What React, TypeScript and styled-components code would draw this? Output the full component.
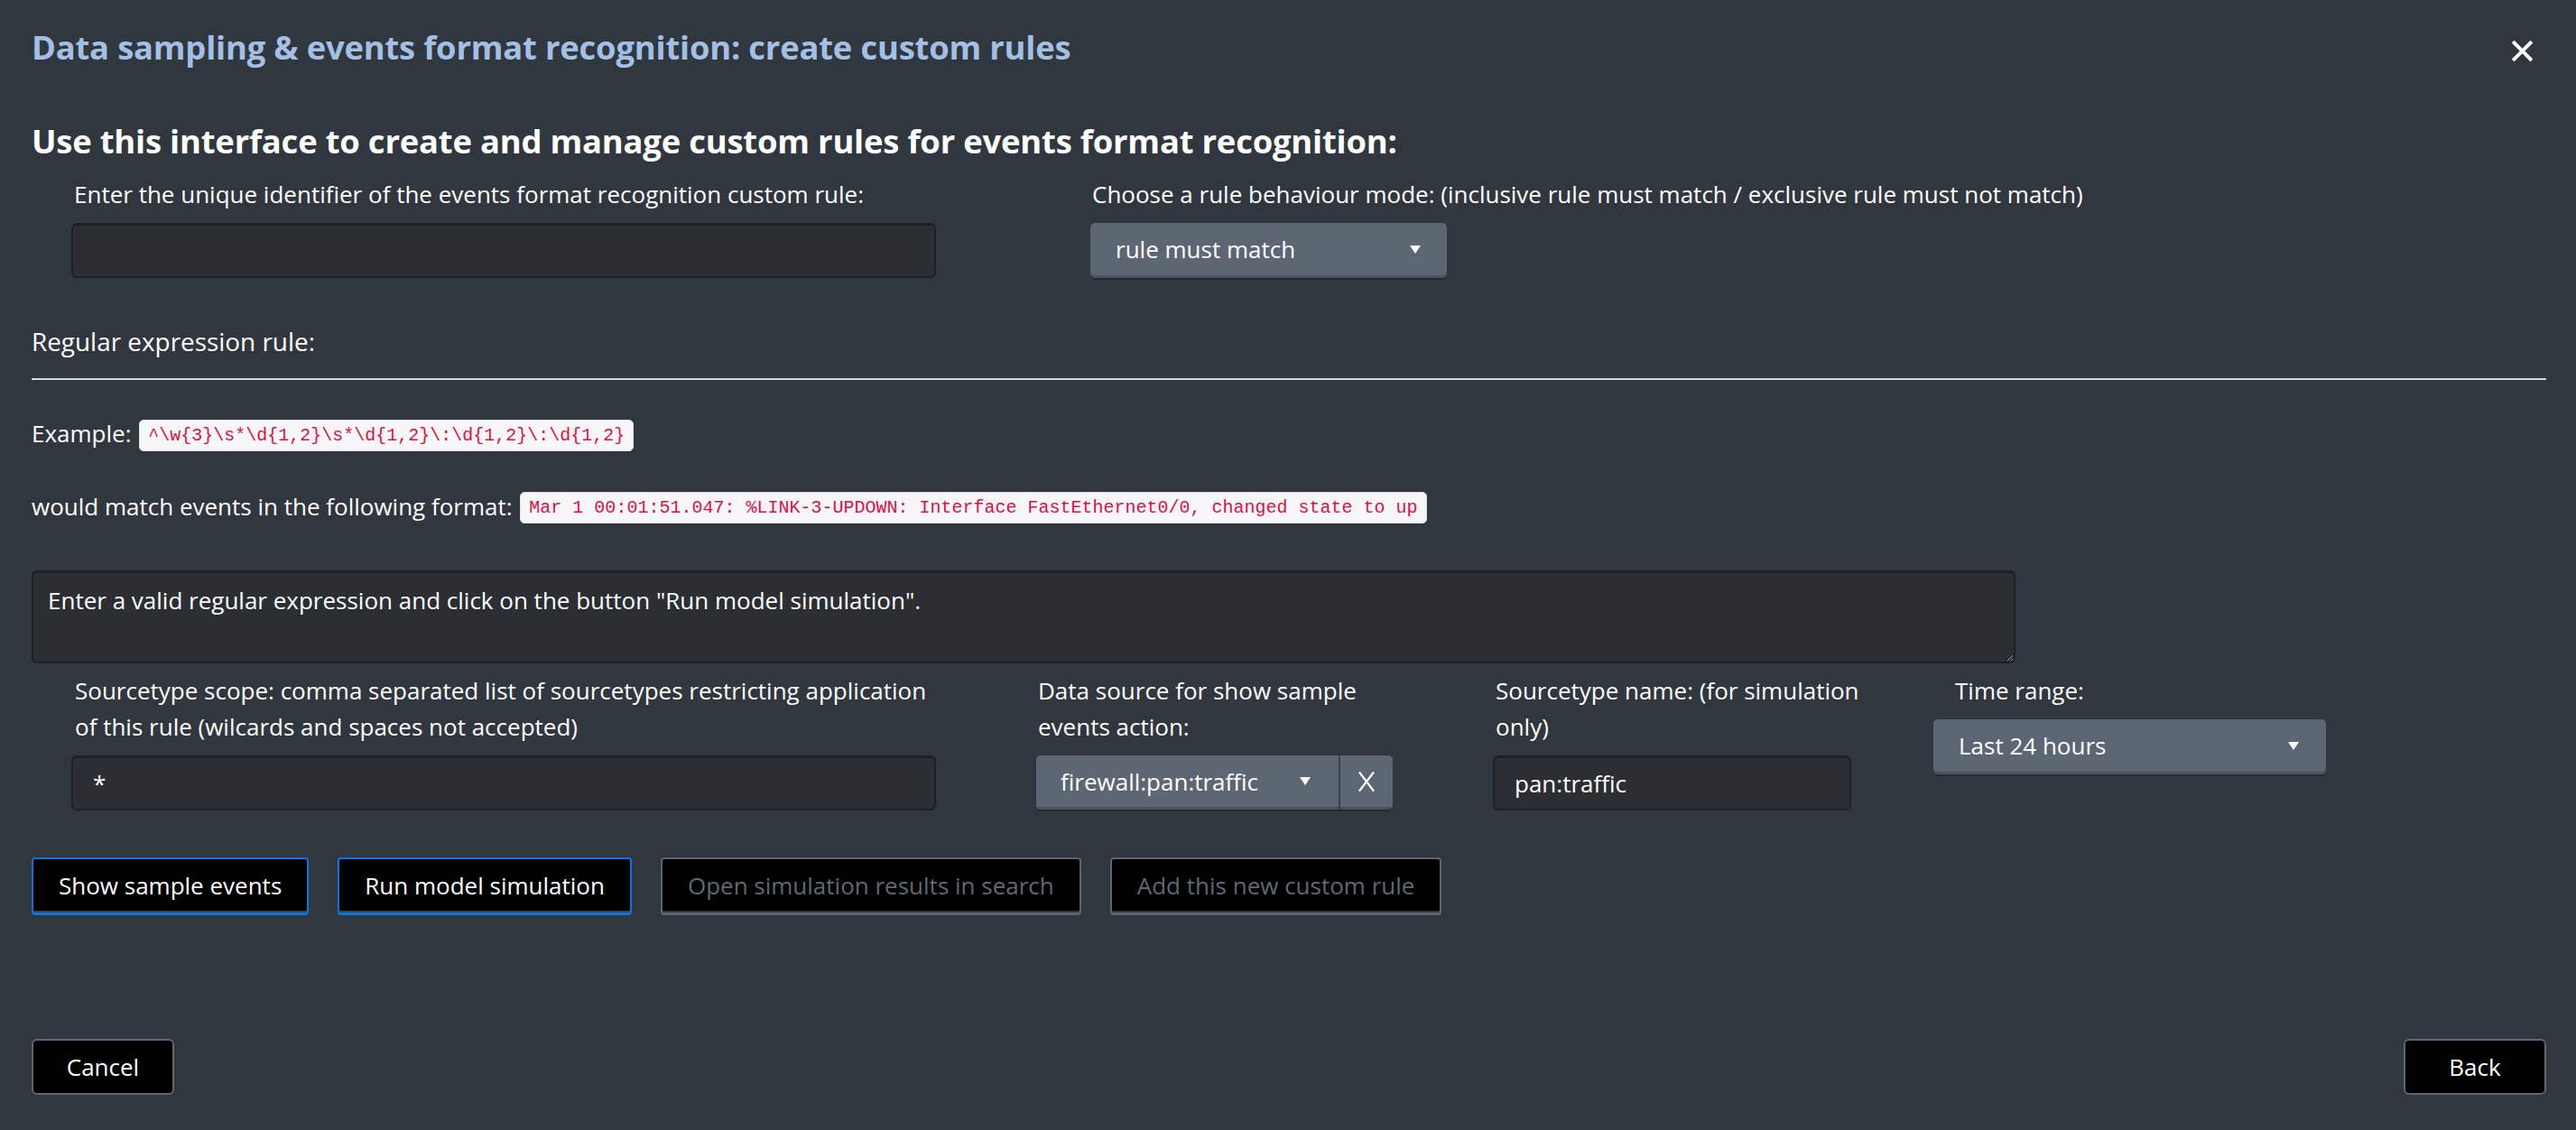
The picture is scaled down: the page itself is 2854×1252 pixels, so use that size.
import React from "react";
import styled, { createGlobalStyle } from "styled-components";

const GlobalStyle = createGlobalStyle`
  html, body {
    margin: 0;
    padding: 0;
    background: #31373e;
  }
  body {
    font-family: "Open Sans", "Liberation Sans", sans-serif;
    color: #ffffff;
    font-size: 26px;
  }
  * { box-sizing: border-box; }
`;

const Modal = styled.div`
  height: 1252px;
  display: flex;
  flex-direction: column;
  background: #31373e;
  overflow: hidden;
`;

const Header = styled.header`
  height: 102px;
  flex: none;
  display: flex;
  align-items: center;
  justify-content: space-between;
  padding: 0 48px 0 35px;
`;

const Title = styled.h1`
  margin: 2px 0 0;
  font-size: 36.4px;
  font-weight: 700;
  line-height: 40px;
  color: #a3c0e4;
  letter-spacing: -0.2px;
`;

const CloseButton = styled.button`
  width: 23px;
  height: 23px;
  margin-top: 10px;
  padding: 0;
  border: 0;
  background: none;
  display: flex;
  cursor: pointer;
`;

const Body = styled.main`
  flex: 1;
  padding: 0 33px 0 35px;
`;

const Heading = styled.h2`
  margin: 34px 0 0;
  font-size: 36.4px;
  font-weight: 700;
  line-height: 40px;
  color: #ffffff;
  letter-spacing: -0.2px;
`;

const FieldRow = styled.div<{ $top: number }>`
  display: flex;
  align-items: flex-start;
  margin-top: ${(p) => p.$top}px;
  padding-left: 44px;
`;

const Field = styled.div<{ $width: number }>`
  width: ${(p) => p.$width}px;
  flex: none;
  display: flex;
  flex-direction: column;
  align-items: flex-start;
`;

const Label = styled.label<{ $inset: number }>`
  display: block;
  padding-left: ${(p) => p.$inset}px;
  margin-bottom: 12px;
  font-size: 26px;
  line-height: 40px;
  color: #ffffff;
  white-space: nowrap;
`;

const TextInput = styled.input<{ $width: number }>`
  width: ${(p) => p.$width}px;
  height: 61px;
  padding: 0 22px;
  background: #2b2f33;
  border: 2px solid #1d2024;
  border-top-width: 3px;
  border-radius: 6px;
  color: #ffffff;
  font-family: "Open Sans", "Liberation Sans", sans-serif;
  font-size: 26px;
  outline: none;
`;

const SelectBox = styled.div<{ $width: number; $pad: number }>`
  width: ${(p) => p.$width}px;
  height: 61px;
  display: flex;
  align-items: center;
  justify-content: space-between;
  padding: 0 ${(p) => p.$pad}px 3px 28px;
  background: #5c6773;
  border-radius: 5px;
  box-shadow: inset 0 -3px 0 #4b545e, 0 2px 0 #272c31;
  color: #ffffff;
  font-size: 26px;
  line-height: 1;
`;

const Caret = styled.span`
  width: 0;
  height: 0;
  border-left: 6px solid transparent;
  border-right: 6px solid transparent;
  border-top: 9px solid #ffffff;
`;

const SelectGroup = styled.div`
  display: flex;
  height: 60px;
  border-radius: 5px;
  box-shadow: 0 2px 0 #272c31;
  overflow: hidden;
`;

const GroupMain = styled.div`
  width: 335px;
  display: flex;
  align-items: center;
  justify-content: space-between;
  padding: 0 31px 3px 27px;
  background: #5c6773;
  box-shadow: inset 0 -3px 0 #4b545e;
  font-size: 26px;
`;

const ClearButton = styled.button`
  width: 60px;
  display: flex;
  align-items: center;
  justify-content: center;
  padding: 0 0 3px;
  border: 0;
  border-left: 2px solid #3a414a;
  background: #5c6773;
  box-shadow: inset 0 -3px 0 #4b545e;
  cursor: pointer;
`;

const SectionTitle = styled.div`
  margin-top: 50px;
  font-size: 27.9px;
  line-height: 40px;
  color: #ffffff;
`;

const Rule = styled.hr`
  margin: 21px 0 0;
  height: 2px;
  border: 0;
  background: #d9dadb;
`;

const Para = styled.p<{ $top: number }>`
  margin: ${(p) => p.$top}px 0 0;
  font-size: 26px;
  line-height: 40px;
  color: #ffffff;
`;

const Code = styled.code`
  display: inline-block;
  vertical-align: middle;
  height: 35px;
  margin-left: 2px;
  padding: 0 9px;
  line-height: 33px;
  background: #f7f7f9;
  border: 1px solid #e1e1e8;
  border-radius: 5px;
  color: #dd1144;
  font-family: "Liberation Mono", "DejaVu Sans Mono", monospace;
  font-size: 20px;
  position: relative;
  top: -1px;
`;

const RegexArea = styled.textarea`
  display: block;
  margin-top: 51px;
  width: 2198px;
  height: 103px;
  padding: 10px 16px;
  background: #2b2f33;
  border: 2px solid #1d2024;
  border-top-width: 3px;
  border-radius: 6px;
  color: #ffffff;
  font-family: "Open Sans", "Liberation Sans", sans-serif;
  font-size: 26px;
  line-height: 40px;
  outline: none;
`;

const ActionBar = styled.div`
  display: flex;
  gap: 32px;
  margin-top: 52px;
`;

const ActionButton = styled.button<{ $primary?: boolean }>`
  height: 64px;
  padding: 0 28px 2px;
  background: #000000;
  border: 2px solid ${(p) => (p.$primary ? "#0a74e0" : "#5c6670")};
  border-bottom-width: 3px;
  border-radius: 4px;
  box-shadow: inset 0 -2px 0 ${(p) => (p.$primary ? "#3a424b" : "#2f353b")};
  color: ${(p) => (p.$primary ? "#ffffff" : "#5f6974")};
  font-family: "Open Sans", "Liberation Sans", sans-serif;
  font-size: 26px;
  white-space: nowrap;
  cursor: ${(p) => (p.$primary ? "pointer" : "default")};
`;

const Footer = styled.footer`
  flex: none;
  display: flex;
  justify-content: space-between;
  padding: 0 33px 39px 35px;
`;

const FooterButton = styled.button`
  width: 158px;
  height: 62px;
  background: #000000;
  border: 2px solid #5c6773;
  border-radius: 6px;
  color: #ffffff;
  font-family: "Open Sans", "Liberation Sans", sans-serif;
  font-size: 26px;
  cursor: pointer;
`;

const CloseIcon = () => (
  <svg width="23" height="23" viewBox="0 0 23 23">
    <path d="M2.5 2.5 L20.5 20.5 M20.5 2.5 L2.5 20.5" stroke="#ffffff" strokeWidth="4" strokeLinecap="square" />
  </svg>
);

const ThinX = () => (
  <svg width="20" height="24" viewBox="0 0 20 24">
    <path d="M2 1.5 L18 22.5 M18 1.5 L2 22.5" stroke="#ffffff" strokeWidth="2.2" />
  </svg>
);

export default function App() {
  return (
    <>
      <GlobalStyle />
      <Modal>
        <Header>
          <Title>Data sampling &amp; events format recognition: create custom rules</Title>
          <CloseButton aria-label="Close">
            <CloseIcon />
          </CloseButton>
        </Header>
        <Body>
          <Heading>Use this interface to create and manage custom rules for events format recognition:</Heading>

          <FieldRow $top={19}>
            <Field $width={1129}>
              <Label $inset={3}>Enter the unique identifier of the events format recognition custom rule:</Label>
              <TextInput $width={958} defaultValue="" />
            </Field>
            <Field $width={1400}>
              <Label $inset={2}>
                Choose a rule behaviour mode: (inclusive rule must match / exclusive rule must not match)
              </Label>
              <SelectBox $width={395} $pad={29}>
                <span>rule must match</span>
                <Caret />
              </SelectBox>
            </Field>
          </FieldRow>

          <SectionTitle>Regular expression rule:</SectionTitle>
          <Rule />

          <Para $top={39}>
            Example: <Code>{"^\\w{3}\\s*\\d{1,2}\\s*\\d{1,2}\\:\\d{1,2}\\:\\d{1,2}"}</Code>
          </Para>
          <Para $top={40}>
            would match events in the following format:{" "}
            <Code>Mar 1 00:01:51.047: %LINK-3-UPDOWN: Interface FastEthernet0/0, changed state to up</Code>
          </Para>

          <RegexArea defaultValue={'Enter a valid regular expression and click on the button "Run model simulation".'} />

          <FieldRow $top={10}>
            <Field $width={1069}>
              <Label $inset={4}>
                Sourcetype scope: comma separated list of sourcetypes restricting application
                <br />
                of this rule (wilcards and spaces not accepted)
              </Label>
              <TextInput $width={958} defaultValue="*" />
            </Field>
            <Field $width={506}>
              <Label $inset={2}>
                Data source for show sample
                <br />
                events action:
              </Label>
              <SelectGroup>
                <GroupMain>
                  <span>firewall:pan:traffic</span>
                  <Caret />
                </GroupMain>
                <ClearButton aria-label="Clear">
                  <ThinX />
                </ClearButton>
              </SelectGroup>
            </Field>
            <Field $width={488}>
              <Label $inset={3}>
                Sourcetype name: (for simulation
                <br />
                only)
              </Label>
              <TextInput $width={397} defaultValue="pan:traffic" />
            </Field>
            <Field $width={500}>
              <Label $inset={24}>Time range:</Label>
              <SelectBox $width={435} $pad={30}>
                <span>Last 24 hours</span>
                <Caret />
              </SelectBox>
            </Field>
          </FieldRow>

          <ActionBar>
            <ActionButton $primary>Show sample events</ActionButton>
            <ActionButton $primary>Run model simulation</ActionButton>
            <ActionButton disabled>Open simulation results in search</ActionButton>
            <ActionButton disabled>Add this new custom rule</ActionButton>
          </ActionBar>
        </Body>
        <Footer>
          <FooterButton>Cancel</FooterButton>
          <FooterButton>Back</FooterButton>
        </Footer>
      </Modal>
    </>
  );
}
